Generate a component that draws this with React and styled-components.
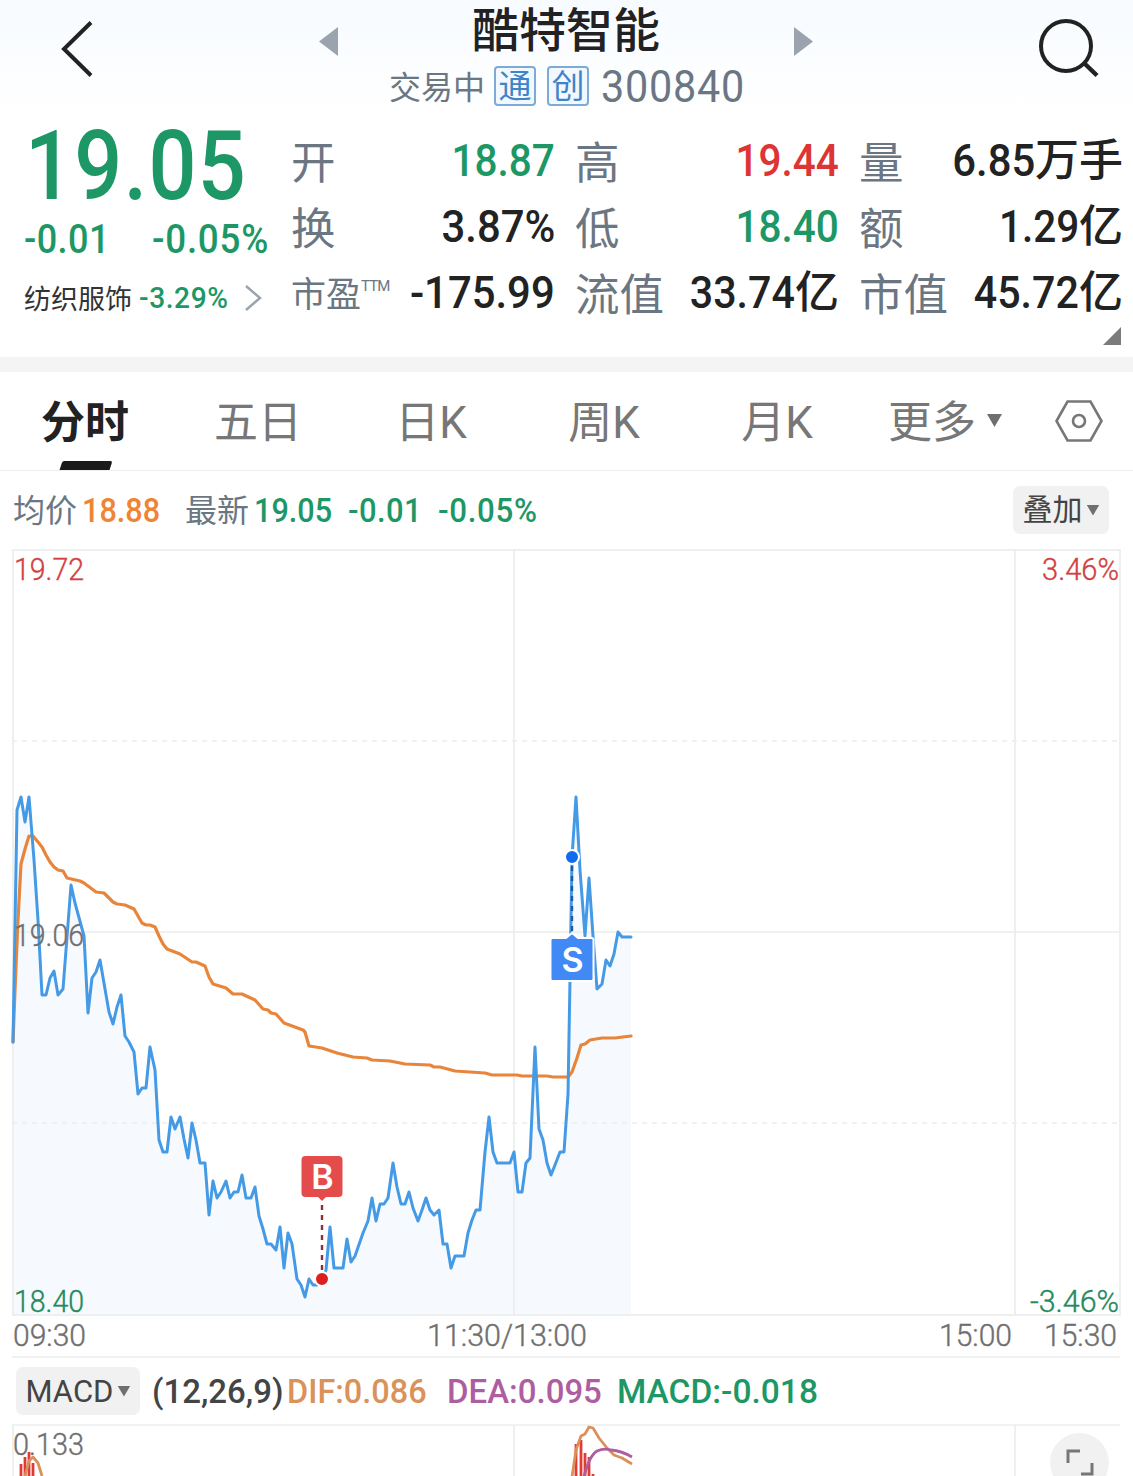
import styled, { createGlobalStyle } from "styled-components";

const GREEN = "#1c9765";
const RED = "#dd3434";
const INK = "#222222";
const SLATE = "#6b7683";
const ORANGE = "#ee8434";
const GRID = "#ebeeee";

const GlobalStyle = createGlobalStyle`
    body {
        margin: 0;
        background: #fff;
        font-family: Roboto, "Noto Sans CJK SC", sans-serif;
    }
    * {
        box-sizing: border-box;
    }
    svg {
        display: block;
    }
`;

const Page = styled.div`
    width: 1133px;
    height: 1476px;
    overflow: hidden;
    display: flex;
    flex-direction: column;
    background: #fff;
    color: ${INK};
    white-space: nowrap;
`;

const Header = styled.header`
    height: 122px;
    flex: none;
    display: grid;
    grid-template-columns: 319px 494px 320px;
    background: linear-gradient(#f7fbff, #fdfeff 70%, #fff);
`;

const BackButton = styled.div`
    padding: 19px 0 0 58px;
`;

const SearchButton = styled.div`
    padding: 16px 0 0 222px;
`;

const Switcher = styled.div`
    display: flex;
    justify-content: space-between;
    align-items: flex-start;
`;

const Arrow = styled.div`
    width: 19px;
    padding-top: 27px;
`;

const Titles = styled.div`
    display: flex;
    flex-direction: column;
    align-items: center;
`;

const StockName = styled.h1`
    margin: 0;
    padding-top: 2px;
    height: 58px;
    line-height: 58px;
    font-size: 47px;
    font-weight: 500;
`;

const SubLine = styled.div`
    display: flex;
    align-items: center;
    height: 56px;
    color: ${SLATE};
    font-size: 32px;
`;

const Status = styled.span`
    padding-bottom: 3px;
`;

const Tag = styled.span`
    width: 42px;
    height: 40px;
    margin-left: ${(p) => p.$left}px;
    border: 2px solid #7eabd6;
    border-radius: 4px;
    background: #f1f8ff;
    color: #3f84c6;
    font-size: 33px;
    line-height: 38px;
    text-align: center;
`;

const Digits = styled.span`
    display: inline-block;
    width: ${(p) => (p.$width ? `${p.$width}px` : "auto")};
    font-size: ${(p) => p.$size}px;
    font-weight: ${(p) => p.$weight || 500};
    letter-spacing: ${(p) => p.$gap || 0}px;
    color: ${(p) => p.$color || "inherit"};
    margin-left: ${(p) => p.$left || 0}px;
    margin-right: ${(p) => -(p.$gap || 0)}px;
    transform: scaleX(${(p) => p.$squeeze || 1});
    transform-origin: ${(p) => p.$origin || "left"} center;
`;

const StockCode = styled(Digits)`
    padding-top: 2px;
`;

const Quote = styled.section`
    height: 235px;
    flex: none;
    display: flex;
    position: relative;
`;

const PriceColumn = styled.div`
    width: 292px;
    padding-left: 24px;
    color: ${GREEN};
`;

const Price = styled.div`
    height: 84px;
    line-height: 89px;
`;

const Changes = styled.div`
    display: grid;
    grid-template-columns: 128px auto;
    height: 64px;
    line-height: 67px;
`;

const Industry = styled.div`
    display: flex;
    align-items: center;
    height: 56px;
    font-size: 27px;
    color: #333;
`;

const IndustryName = styled.span`
    padding-bottom: 2px;
`;

const Chevron = styled.svg`
    margin-left: auto;
    margin-right: 29px;
`;

const Stats = styled.div`
    display: grid;
    grid-template-columns: repeat(3, 263px);
    grid-auto-rows: 66px;
    column-gap: 21px;
    padding-top: 6px;
`;

const Stat = styled.div`
    display: flex;
    justify-content: space-between;
    align-items: center;
    line-height: 66px;
`;

const StatLabel = styled.span`
    padding-top: 5px;
    margin-left: -1px;
    color: ${SLATE};
    font-size: ${(p) => (p.$small ? 35 : 44.5)}px;
    sup {
        display: inline-block;
        font-size: 15px;
        letter-spacing: -0.9px;
        line-height: 17px;
        vertical-align: 16px;
        font-weight: 400;
    }
`;

const StatValue = styled.span`
    display: flex;
    align-items: center;
    font-size: 44px;
    font-weight: 500;
    color: ${(p) => p.$color || INK};
`;

const Unit = styled.span`
    padding-bottom: 1px;
`;

const Corner = styled.div`
    position: absolute;
    right: 12px;
    bottom: 12px;
    width: 18px;
    height: 18px;
    background: #7b7b7b;
    clip-path: polygon(100% 0, 100% 100%, 0 100%);
`;

const Divider = styled.div`
    height: 15px;
    flex: none;
    background: #f4f4f4;
`;

const Tabs = styled.nav`
    height: 99px;
    flex: none;
    display: flex;
    border-bottom: 1px solid #eeeeee;
`;

const Tab = styled.div`
    position: relative;
    width: 173px;
    height: 98px;
    padding-right: 3px;
    line-height: 102px;
    text-align: center;
    font-size: 44px;
    font-weight: ${(p) => (p.$active ? 700 : 400)};
    color: ${(p) => (p.$active ? INK : "#777")};

    &::after {
        content: "";
        display: ${(p) => (p.$active ? "block" : "none")};
        position: absolute;
        left: 61px;
        bottom: 0;
        width: 50px;
        height: 9px;
        border-radius: 2px 2px 0 0;
        background: #1b1b1b;
        transform: skewX(-18deg);
    }
`;

const MoreTab = styled(Tab)`
    display: flex;
    align-items: flex-start;
    width: 190px;
    padding-left: 23px;
    gap: 11px;

    span {
        margin-top: 42px;
    }
`;

const Caret = styled.span`
    width: ${(p) => p.$size}px;
    height: ${(p) => p.$size - 2}px;
    background: #6f6f6f;
    clip-path: polygon(0 0, 100% 0, 50% 100%);
`;

const InfoBar = styled.div`
    height: 78px;
    flex: none;
    display: flex;
    align-items: center;
    padding: 0 24px 0 13px;
`;

const InfoLabel = styled.span`
    margin-left: ${(p) => p.$left || 0}px;
    padding-bottom: 4px;
    font-size: 32px;
    color: ${SLATE};
`;

const Chip = styled.div`
    display: flex;
    align-items: center;
    justify-content: center;
    gap: 4px;
    width: ${(p) => p.$width}px;
    height: 48px;
    border-radius: 7px;
    background: #f1f1f1;
    color: #444;
    font-size: 31px;
`;

const OverlayChip = styled(Chip)`
    margin-left: auto;
    font-size: 30px;
    line-height: 46px;
    span:first-child {
        padding-bottom: 1px;
    }
`;

const MacdBar = styled.div`
    height: 66px;
    flex: none;
    display: flex;
    align-items: center;
    padding-left: 16px;
`;

const MacdPane = styled.div`
    position: relative;
    height: 52px;
    flex: none;
`;

const ExpandButton = styled.div`
    position: absolute;
    left: 1050px;
    top: 9px;
    width: 59px;
    height: 59px;
    border-radius: 50%;
    background: #f1f1f1;
`;

const ChartSvg = styled.svg`
    flex: none;
`;

const ChartText = styled.text`
    font-family: Roboto, sans-serif;
    font-size: 31px;
    font-weight: 300;
    fill: ${(p) => p.$color || "#6f6f6f"};
    stroke: ${(p) => p.$color || "#6f6f6f"};
    stroke-width: 0.4px;
`;

const MarkText = styled.text`
    font-family: Inter, Roboto, sans-serif;
    font-size: 34px;
    font-weight: 600;
    fill: #fff;
    text-anchor: middle;
`;

const stats = [
  { label: "开", value: "18.87", color: GREEN },
  { label: "高", value: "19.44", color: RED },
  { label: "量", value: "6.85", unit: "万手", squeeze: 0.93 },
  { label: "换", value: "3.87%", squeeze: 0.93 },
  { label: "低", value: "18.40", color: GREEN },
  { label: "额", value: "1.29", unit: "亿" },
  { label: "市盈", sup: "TTM", value: "-175.99", squeeze: 0.93 },
  { label: "流值", value: "33.74", unit: "亿", squeeze: 0.915 },
  { label: "市值", value: "45.72", unit: "亿", squeeze: 0.915 },
];

const priceLine =
  "13,1042 17,810 21,797 25,822 29,797 34,860 38,920 42,995 46,995 50,978 54,971 58,995 63,989 71,885 75,903 84,936 88,1013 92,978 96,972 100,960 109,1012 113,1024 117,1007 121,995 125,1036 129,1042 134,1052 138,1094 142,1088 146,1088 150,1047 155,1070 159,1140 163,1152 167,1152 171,1117 175,1129 180,1117 184,1139 188,1158 192,1123 196,1140 200,1163 205,1163 209,1215 213,1181 217,1198 221,1192 226,1181 230,1198 234,1192 238,1192 242,1175 246,1198 251,1198 255,1187 259,1216 263,1229 267,1244 271,1244 276,1250 280,1227 284,1268 288,1233 292,1244 297,1279 301,1285 305,1297 309,1279 313,1285 317,1285 322,1279 326,1270 330,1227 334,1268 343,1268 347,1239 351,1262 355,1256 363,1233 368,1221 372,1198 376,1221 380,1204 384,1204 388,1198 393,1163 397,1187 401,1204 405,1204 409,1192 413,1208 418,1221 422,1210 426,1198 430,1210 434,1215 439,1210 443,1244 447,1244 451,1268 455,1256 464,1256 468,1233 472,1220 476,1210 480,1210 485,1152 489,1117 493,1152 497,1163 510,1163 514,1152 518,1192 522,1192 526,1163 530,1158 535,1047 539,1129 543,1140 547,1163 551,1175 555,1165 560,1152 564,1152 568,1094 570,980 572,857 576,797 580,870 585,936 589,878 593,936 597,989 602,984 606,960 610,966 614,954 618,932 622,937 631,937";

const averageLine =
  "13,1042 15,990 18,920 21,864 25,849 29,836 33,836 38,842 42,847 46,855 50,862 54,867 58,870 63,871 67,878 80,881 84,883 96,892 104,893 113,902 117,904 125,905 134,909 142,923 146,925 150,925 155,927 159,936 163,944 167,949 180,954 192,962 196,962 205,966 209,977 213,984 226,988 233,994 242,994 255,1000 263,1009 268,1010 271,1013 276,1014 284,1023 303,1030 305,1032 309,1046 322,1048 337,1053 353,1057 367,1058 372,1060 390,1061 405,1064 430,1065 434,1067 440,1067 455,1071 485,1073 492,1075 517,1075 522,1076 547,1076 553,1077 568,1077 572,1072 577,1058 581,1045 585,1044 590,1040 602,1038 615,1038 623,1037 631,1036";

const chartLabels = [
  { text: "19.72", x: 14, y: 580, width: 70, color: "#d23f3f" },
  { text: "3.46%", x: 1042, y: 580, width: 77, color: "#d23f3f" },
  { text: "19.06", x: 14, y: 946, width: 70 },
  { text: "18.40", x: 14, y: 1312, width: 70, color: "#25895d" },
  { text: "-3.46%", x: 1030, y: 1312, width: 89, color: "#25895d" },
  { text: "09:30", x: 13, y: 1346, width: 73 },
  { text: "11:30/13:00", x: 427, y: 1346, width: 160 },
  { text: "15:00", x: 939, y: 1346, width: 73 },
  { text: "15:30", x: 1044, y: 1346, width: 73 },
];

const macdBars = [
  [21, 1464], [25, 1457], [29, 1452], [33, 1463],
  [576, 1444], [581, 1440], [585, 1453], [589, 1457], [593, 1474],
];

const PriceChart = () => (
  <ChartSvg width="1133" height="809" viewBox="0 549 1133 809">
    <polygon points={`13,1315 ${priceLine} 631,1315`} fill="#f6faff" />
    <g stroke={GRID} strokeWidth="1.7" fill="none">
      <rect x="13" y="550" width="1107" height="765" />
      <path d="M514 550V1315M1015 550V1315M13 932H1120M12 1357H1120" />
      <path d="M12 741H1120M12 1123H1120" strokeDasharray="5 5" strokeWidth="1.6" />
    </g>
    <polyline points={averageLine} fill="none" stroke="#e8853a" strokeWidth="3.2" strokeLinejoin="round" strokeLinecap="round" />
    <polyline points={priceLine} fill="none" stroke="#459ae6" strokeWidth="3" strokeLinejoin="round" strokeLinecap="round" />
    {chartLabels.map((l) => (
      <ChartText key={l.text} x={l.x} y={l.y} textLength={l.width} lengthAdjust="spacingAndGlyphs" $color={l.color}>
        {l.text}
      </ChartText>
    ))}

    <path d="M322 1205V1272" stroke="#8c3038" strokeWidth="2.4" strokeDasharray="5 5" />
    <circle cx="322" cy="1279" r="7" fill="#dc2020" stroke="#fff" strokeWidth="2" />
    <rect x="301.5" y="1156" width="41" height="41" rx="4" fill="#e44c4c" />
    <path d="M317 1196h10l-5 5z" fill="#e44c4c" />
    <MarkText x="322.5" y="1189">B</MarkText>

    <path d="M572 866V934" stroke="#205a9c" strokeWidth="2.4" strokeDasharray="5 5" />
    <circle cx="572" cy="857" r="7" fill="#126bec" stroke="#fff" strokeWidth="2" />
    <path d="M552.500 938H566L572 933L578 938H591.500a2 2 0 0 1 2 2V979a2 2 0 0 1-2 2H552.500a2 2 0 0 1-2-2V940a2 2 0 0 1 2-2z" fill="#4189f4" stroke="#fff" strokeWidth="2" />
    <MarkText x="572.5" y="972">S</MarkText>
  </ChartSvg>
);

const MacdChart = () => (
  <svg width="1133" height="52" viewBox="0 1424 1133 52">
    <path d="M12 1425H1120M13 1425V1476M514 1425V1476M1015 1425V1476" stroke={GRID} strokeWidth="1.7" />
    <ChartText x="13" y="1455" textLength="71" lengthAdjust="spacingAndGlyphs">0.133</ChartText>
    {macdBars.map(([x, y]) => (
      <path key={x} d={`M${x} ${y}V1476`} stroke="#e03a36" strokeWidth="2.8" />
    ))}
    <g fill="none" strokeWidth="2.8" strokeLinejoin="round">
      <path d="M25 1476L29 1461L33 1457L38 1463L42 1476" stroke="#d9905a" />
      <path d="M572 1477L576 1450L581 1436L585 1434L589 1427L593 1428L599 1438L607 1448L614 1455L622 1458L632 1464" stroke="#d9905a" />
      <path d="M584 1477Q589 1456 597 1451Q604 1448 611 1450Q622 1451 632 1457" stroke="#ae5ea0" />
    </g>
  </svg>
);

const App = () => {
  return (
    <Page>
      <GlobalStyle />
      <Header>
        <BackButton>
          <svg width="38" height="62" fill="none" stroke={INK} strokeWidth="4">
            <path d="M33 3.500L6 30L33 56.500" />
          </svg>
        </BackButton>
        <Switcher>
          <Arrow>
            <svg width="19" height="30"><path d="M19 0V29L0 14.5z" fill="#9ba4ae" /></svg>
          </Arrow>
          <Titles>
            <StockName>酷特智能</StockName>
            <SubLine>
              <Status>交易中</Status>
              <Tag $left={9}>通</Tag>
              <Tag $left={11}>创</Tag>
              <StockCode $size={43.5} $weight={400} $left={12} $gap={0.8} $squeeze={0.95} $width={143}>300840</StockCode>
            </SubLine>
          </Titles>
          <Arrow>
            <svg width="19" height="30"><path d="M0 0V29L19 14.5z" fill="#9ba4ae" /></svg>
          </Arrow>
        </Switcher>
        <SearchButton>
          <svg width="66" height="64" fill="none" stroke={INK} strokeWidth="4">
            <ellipse cx="31" cy="30" rx="25" ry="25" />
            <path d="M49 47L62 59.500" strokeWidth="4.5" />
          </svg>
        </SearchButton>
      </Header>

      <Quote>
        <PriceColumn>
          <Price>
            <Digits $size={96} $left={1} $gap={1.5} $squeeze={0.88}>19.05</Digits>
          </Price>
          <Changes>
            <Digits $size={40} $gap={0.5} $squeeze={0.9}>-0.01</Digits>
            <Digits $size={40} $gap={0.8} $squeeze={0.92}>-0.05%</Digits>
          </Changes>
          <Industry>
            <IndustryName>纺织服饰</IndustryName>
            <Digits $size={29} $left={7} $gap={0.6} $squeeze={0.97} $color={GREEN}>-3.29%</Digits>
            <Chevron width="20" height="28" fill="none" stroke="#9ba4ae" strokeWidth="2.5">
              <path d="M3 2L17 14L3 26" />
            </Chevron>
          </Industry>
        </PriceColumn>
        <Stats>
          {stats.map((s) => (
            <Stat key={s.label}>
              <StatLabel $small={!!s.sup}>
                {s.label}
                {s.sup && <sup>{s.sup}</sup>}
              </StatLabel>
              <StatValue $color={s.color}>
                <Digits $size={45} $squeeze={s.squeeze || 0.9} $origin="right">{s.value}</Digits>
                {s.unit && <Unit>{s.unit}</Unit>}
              </StatValue>
            </Stat>
          ))}
        </Stats>
        <Corner />
      </Quote>

      <Divider />

      <Tabs>
        <Tab $active>分时</Tab>
        <Tab>五日</Tab>
        <Tab>日K</Tab>
        <Tab>周K</Tab>
        <Tab>月K</Tab>
        <MoreTab>
          更多
          <Caret $size={15} />
        </MoreTab>
        <svg width="48" height="98" fill="none" stroke="#777" strokeWidth="2.6">
          <path d="M1.500 49L12.500 29.500H35.500L46.500 49L35.500 68.500H12.500z" />
          <circle cx="24" cy="49" r="6" />
        </svg>
      </Tabs>

      <InfoBar>
        <InfoLabel>均价</InfoLabel>
        <Digits $size={34} $left={5} $width={78} $squeeze={0.9} $color={ORANGE}>18.88</Digits>
        <InfoLabel $left={25}>最新</InfoLabel>
        <Digits $size={34} $left={5} $width={78} $squeeze={0.9} $color={GREEN}>19.05</Digits>
        <Digits $size={34} $left={16} $width={73} $gap={0.5} $squeeze={0.91} $color={GREEN}>-0.01</Digits>
        <Digits $size={34} $left={17} $gap={0.7} $squeeze={0.92} $color={GREEN}>-0.05%</Digits>
        <OverlayChip $width={96}>
          <span>叠加</span>
          <Caret $size={13} />
        </OverlayChip>
      </InfoBar>

      <PriceChart />

      <MacdBar>
        <Chip $width={124}>
          MACD
          <Caret $size={13} />
        </Chip>
        <Digits $size={34} $left={12} $width={132} $squeeze={0.97} $color="#444">(12,26,9)</Digits>
        <Digits $size={34} $left={3} $width={141} $squeeze={0.955} $color="#d9925a">DIF:0.086</Digits>
        <Digits $size={34} $left={19} $width={156} $squeeze={0.97} $color="#ae5ea0">DEA:0.095</Digits>
        <Digits $size={34} $left={14} $squeeze={0.985} $color={GREEN}>MACD:-0.018</Digits>
      </MacdBar>

      <MacdPane>
        <MacdChart />
        <ExpandButton>
          <svg width="59" height="59" fill="none" stroke="#777" strokeWidth="3">
            <path d="M18 30V18H30M42 30V41H31" />
          </svg>
        </ExpandButton>
      </MacdPane>
    </Page>
  );
};

export default App;
